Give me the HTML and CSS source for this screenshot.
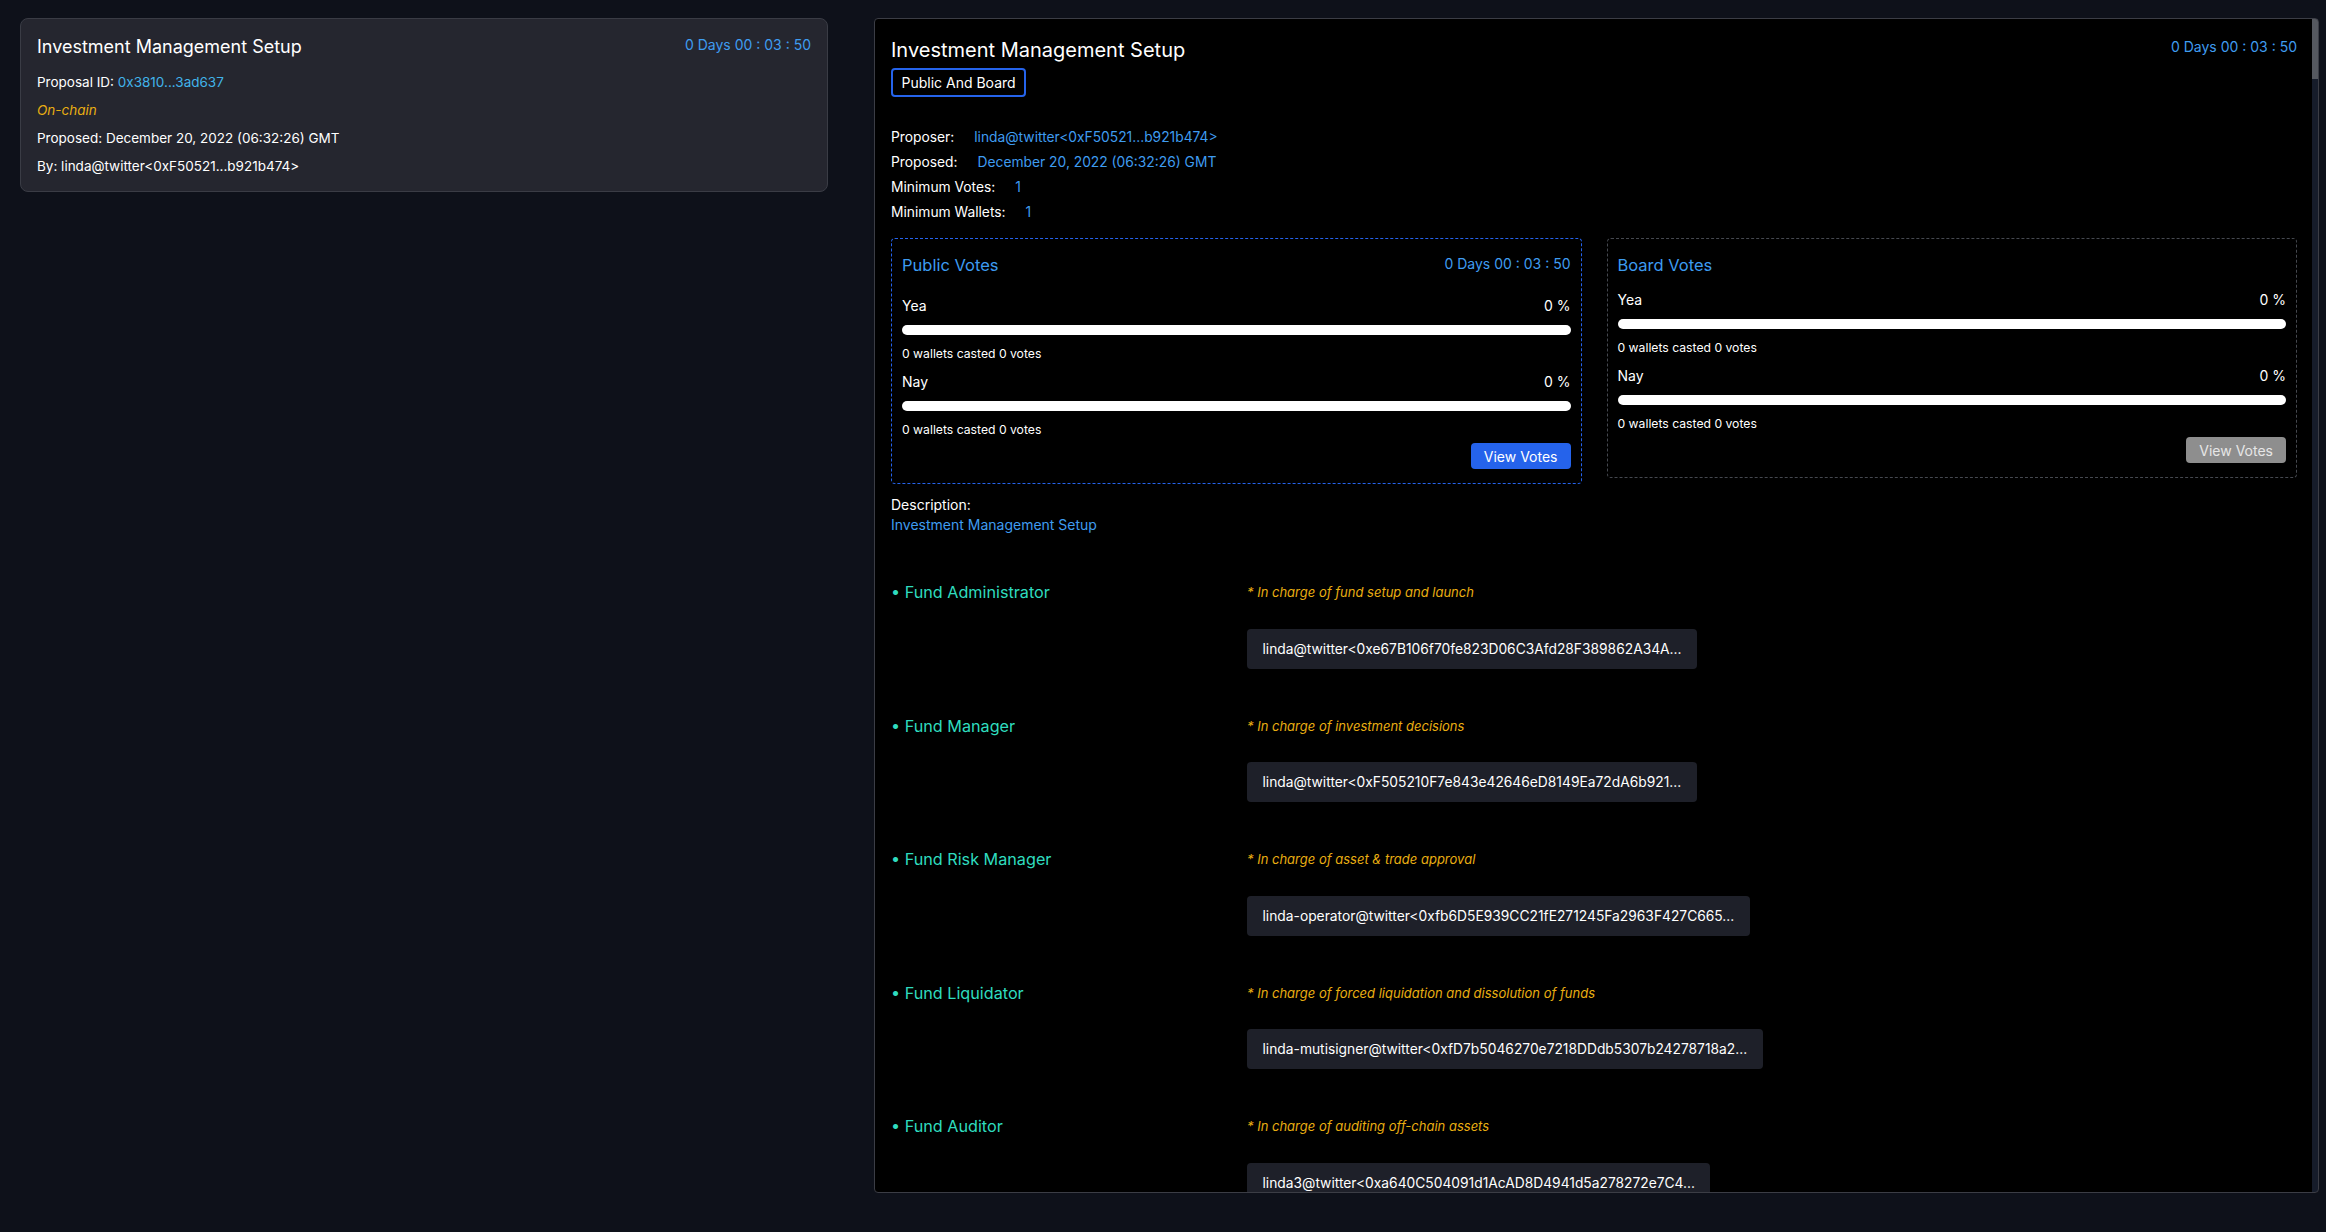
FILE: index.html
```html
<!DOCTYPE html>
<html lang="en">
<head>
  <meta charset="UTF-8" />
  <meta name="viewport" content="width=device-width, initial-scale=1.0" />
  <title>Investment Management Setup</title>
  <link rel="stylesheet" href="styles.css">
</head>
<body>
  <div class="page">
    <aside class="card">
      <div class="card-head">
        <h2 class="card-title">Investment Management Setup</h2>
        <span class="countdown">0 Days 00 : 03 : 50</span>
      </div>
      <p class="card-line">Proposal ID: <span class="proposal-id">0x3810...3ad637</span></p>
      <p class="card-line chain">On-chain</p>
      <p class="card-line">Proposed: December 20, 2022 (06:32:26) GMT</p>
      <p class="card-line">By: linda@twitter&lt;0xF50521...b921b474&gt;</p>
    </aside>

    <section class="detail">
      <div class="detail-head">
        <h1 class="detail-title">Investment Management Setup</h1>
        <span class="countdown">0 Days 00 : 03 : 50</span>
      </div>
      <span class="badge">Public And Board</span>

      <div class="facts">
        <div class="fact"><span>Proposer:</span><span class="fact-value">linda@twitter&lt;0xF50521...b921b474&gt;</span></div>
        <div class="fact"><span>Proposed:</span><span class="fact-value">December 20, 2022 (06:32:26) GMT</span></div>
        <div class="fact"><span>Minimum Votes:</span><span class="fact-value">1</span></div>
        <div class="fact"><span>Minimum Wallets:</span><span class="fact-value">1</span></div>
      </div>

      <div class="votes">
        <div class="vote-box public">
          <div class="vote-head">
            <h3 class="vote-title">Public Votes</h3>
            <span class="countdown">0 Days 00 : 03 : 50</span>
          </div>
          <div class="vote-group">
            <div class="vote-row"><span>Yea</span><span>0 %</span></div>
            <div class="bar"></div>
            <div class="vote-count">0 wallets casted 0 votes</div>
          </div>
          <div class="vote-group">
            <div class="vote-row"><span>Nay</span><span>0 %</span></div>
            <div class="bar"></div>
            <div class="vote-count">0 wallets casted 0 votes</div>
          </div>
          <div class="vote-actions"><button class="view-btn">View Votes</button></div>
        </div>

        <div class="vote-box">
          <div class="vote-head">
            <h3 class="vote-title">Board Votes</h3>
          </div>
          <div class="vote-group">
            <div class="vote-row"><span>Yea</span><span>0 %</span></div>
            <div class="bar"></div>
            <div class="vote-count">0 wallets casted 0 votes</div>
          </div>
          <div class="vote-group">
            <div class="vote-row"><span>Nay</span><span>0 %</span></div>
            <div class="bar"></div>
            <div class="vote-count">0 wallets casted 0 votes</div>
          </div>
          <div class="vote-actions"><button class="view-btn disabled">View Votes</button></div>
        </div>
      </div>

      <div class="desc">
        <p>Description:</p>
        <p class="desc-text">Investment Management Setup</p>
      </div>

      <div class="roles">
        <div class="role">
          <div class="role-name">• Fund Administrator</div>
          <div>
            <div class="role-note">* In charge of fund setup and launch</div>
            <div class="role-address">linda@twitter&lt;0xe67B106f70fe823D06C3Afd28F389862A34A...</div>
          </div>
        </div>
        <div class="role">
          <div class="role-name">• Fund Manager</div>
          <div>
            <div class="role-note">* In charge of investment decisions</div>
            <div class="role-address">linda@twitter&lt;0xF505210F7e843e42646eD8149Ea72dA6b921...</div>
          </div>
        </div>
        <div class="role">
          <div class="role-name">• Fund Risk Manager</div>
          <div>
            <div class="role-note">* In charge of asset &amp; trade approval</div>
            <div class="role-address">linda-operator@twitter&lt;0xfb6D5E939CC21fE271245Fa2963F427C665...</div>
          </div>
        </div>
        <div class="role">
          <div class="role-name">• Fund Liquidator</div>
          <div>
            <div class="role-note">* In charge of forced liquidation and dissolution of funds</div>
            <div class="role-address">linda-mutisigner@twitter&lt;0xfD7b5046270e7218DDdb5307b24278718a2...</div>
          </div>
        </div>
        <div class="role">
          <div class="role-name">• Fund Auditor</div>
          <div>
            <div class="role-note">* In charge of auditing off-chain assets</div>
            <div class="role-address">linda3@twitter&lt;0xa640C504091d1AcAD8D4941d5a278272e7C4...</div>
          </div>
        </div>
      </div>
    </section>
  </div>
</body>
</html>
```

FILE: styles.css
```css
* {
  box-sizing: border-box;
  margin: 0;
  padding: 0;
}
body {
  background: #0e111a;
  color: #fff;
  font-family: Inter, "Noto Sans", sans-serif;
  overflow: hidden;
}
.page {
  display: flex;
  align-items: flex-start;
  gap: 46px;
  padding: 18px 7px 0 20px;
}
.card {
  width: 808px;
  flex: none;
  background: #25262f;
  border: 1px solid #3a3c45;
  border-radius: 8px;
  padding: 16px 16px 11px;
}
.card-head {
  display: flex;
  justify-content: space-between;
  align-items: flex-start;
  margin-bottom: 9px;
}
.card-title {
  font-size: 18px;
  font-weight: 400;
  line-height: 24px;
}
.countdown {
  color: #3f9cf0;
  font-size: 14px;
  line-height: 19px;
}
.card-line {
  font-size: 13.5px;
  line-height: 28px;
}
.proposal-id {
  color: #41b3ea;
}
.chain {
  color: #e9ae12;
  font-style: italic;
}

/* detail panel, scrollbar drawn as a fixed background strip */
.detail {
  flex: 1;
  height: 1175px;
  border: 1px solid #3b3d45;
  border-radius: 4px;
  overflow-y: auto;
  scrollbar-width: none;
  padding: 18px 21px 40px 16px;
  background:
    linear-gradient(#55585f, #55585f) no-repeat right top / 6px 60px,
    linear-gradient(#161c2a, #161c2a) no-repeat right top / 6px 100%,
    #000;
}
.detail::-webkit-scrollbar {
  display: none;
}
.detail-head {
  display: flex;
  justify-content: space-between;
  align-items: flex-start;
}
.detail-title {
  font-size: 20px;
  font-weight: 400;
  line-height: 26px;
}
.badge {
  display: inline-block;
  margin-top: 5px;
  border: 2px solid #2563eb;
  border-radius: 4px;
  padding: 0 8.5px;
  font-size: 14px;
  line-height: 25px;
}
.facts {
  margin-top: 28px;
}
.fact {
  display: flex;
  gap: 20px;
  font-size: 13.8px;
  line-height: 25px;
}
.fact-value {
  color: #3f9cf0;
}

/* votes */
.votes {
  display: grid;
  grid-template-columns: 1fr 1fr;
  gap: 25px;
  align-items: start;
  margin-top: 13px;
}
.vote-box {
  border: 1px dashed #45484f;
  border-radius: 4px;
  padding: 15px 10px 14px;
}
.vote-box.public {
  border-color: #2563eb;
}
.vote-head {
  display: flex;
  justify-content: space-between;
  align-items: flex-start;
  margin-bottom: 14px;
}
.vote-title {
  color: #3d9bf0;
  font-size: 16.5px;
  font-weight: 400;
  line-height: 22px;
}
.vote-head .countdown {
  line-height: 20px;
  padding-bottom: 8px;
}
.vote-row {
  display: flex;
  justify-content: space-between;
  font-size: 14px;
  line-height: 20px;
}
.bar {
  height: 10px;
  border-radius: 5px;
  background: #fff;
  margin: 9px 0 10px;
}
.vote-count {
  font-size: 12.2px;
  line-height: 18px;
}
.vote-group + .vote-group {
  margin-top: 8.5px;
}
.vote-actions {
  display: flex;
  justify-content: flex-end;
  margin-top: 4.5px;
}
.view-btn {
  height: 26px;
  padding: 0 13px;
  border: none;
  border-radius: 4px;
  background: #2563eb;
  color: #fff;
  font-family: inherit;
  font-size: 14px;
}
.view-btn.disabled {
  background: #8e8e8e;
  color: #e6e6e6;
}

/* description + roles */
.desc {
  margin-top: 11px;
  font-size: 14px;
  line-height: 19.5px;
}
.desc-text {
  color: #3f9cf0;
}
.roles {
  margin-top: 48px;
}
.role {
  display: grid;
  grid-template-columns: 356px 1fr;
}
.role + .role {
  margin-top: 47px;
}
.role-name {
  color: #2fdcbf;
  font-size: 16.2px;
  line-height: 20px;
}
.role-note {
  color: #e9ae12;
  font-style: italic;
  font-size: 13px;
  line-height: 20px;
}
.role-address {
  display: inline-block;
  margin-top: 26.5px;
  background: #1e2029;
  border-radius: 4px;
  padding: 0 15.5px;
  font-size: 13.8px;
  line-height: 40px;
}
```
